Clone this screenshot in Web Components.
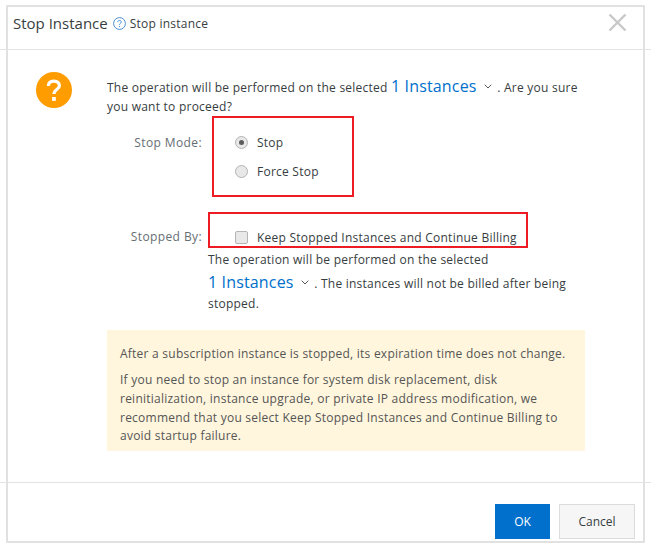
<!DOCTYPE html>
<html lang="en">
<head>
<meta charset="UTF-8">
<title>Stop Instance</title>
<style>
    html, body { margin: 0; background: #fff; }
    body { font-family: "Open Sans", "Liberation Sans", sans-serif; color: #373d41; letter-spacing: .24px; }
</style>
</head>
<body>
<stop-dialog>
    <span slot="title">Stop Instance</span>
    <span slot="hint">Stop instance</span>
    <confirm-intro>
        The operation will be performed on the selected <instance-link></instance-link> . Are you sure you want to proceed?
    </confirm-intro>
    <form-row label="Stop Mode:" class="mode">
        <choice-item type="radio" checked>Stop</choice-item>
        <choice-item type="radio">Force Stop</choice-item>
    </form-row>
    <form-row label="Stopped By:" class="by">
        <choice-item type="checkbox">Keep Stopped Instances and Continue Billing</choice-item>
        <stop-note>The operation will be performed on the selected <instance-link></instance-link> . The instances will not be billed after being stopped.</stop-note>
    </form-row>
    <notice-box>
        <p>After a subscription instance is stopped, its expiration time does not change.</p>
        <p>If you need to stop an instance for system disk replacement, disk reinitialization, instance upgrade, or private IP address modification, we recommend that you select Keep Stopped Instances and Continue Billing to avoid startup failure.</p>
    </notice-box>
</stop-dialog>
<script>
    class StopDialog extends HTMLElement {
        constructor() {
            super();
            this.attachShadow({mode: 'open'}).innerHTML = `
            <style>
                :host { display: block; position: relative; width: 651px; height: 544px; overflow: hidden; font-size: 12px; }
                .frame { position: absolute; left: 6px; top: 5px; width: 635px; height: 534px; border: 2px solid #e1e1e1; border-radius: 1px; pointer-events: none; }
                .mark { position: absolute; border: 2px solid #ed1c24; pointer-events: none; box-sizing: border-box; }
                .mark.a { left: 212px; top: 116px; width: 142px; height: 81px; }
                .mark.b { left: 208px; top: 212px; width: 320px; height: 36px; }
                header { height: 49px; border-bottom: 1px solid #e3e3e3; padding-left: 13px; padding-right: 24px; display: flex; align-items: flex-start; }
                .title { font-size: 15px; letter-spacing: 0; line-height: 20px; margin-top: 13px; color: #373d41; }
                .help { width: 13px; height: 13px; margin: 17px 3px 0 5px; flex: none; }
                .hint { font-size: 12px; line-height: 18px; margin-top: 15px; margin-left: 1px; color: #373d41; }
                .close { margin-left: auto; margin-top: 13px; width: 19px; height: 19px; }
                main { height: 432px; box-sizing: border-box; display: flex; padding: 22px 0 0 36px; }
                .icon { width: 36px; height: 36px; flex: none; }
                .content { width: 478px; margin-left: 35px; }
                footer { border-top: 1px solid #e3e3e3; height: 60px; display: flex; justify-content: flex-end; padding: 21px 16px 0 0; box-sizing: border-box; gap: 9px; }
                button { font: inherit; font-size: 12px; height: 35px; padding: 0; box-sizing: border-box; }
                .ok { width: 55px; border: 0; background: #0070cc; color: #fff; }
                .cancel { width: 76px; border: 1px solid #dcdcdc; background: #f6f6f6; color: #373d41; }
            </style>
            <header>
                <div class="title"><slot name="title"></slot></div>
                <svg class="help" viewBox="0 0 13 13" fill="none">
                    <circle cx="6.5" cy="6.5" r="5.9" stroke="#4a8ed1" stroke-width="1"/>
                    <path d="M4.7 5.1c0-1 .8-1.7 1.8-1.7s1.8.7 1.8 1.6c0 1.3-1.8 1.4-1.8 2.8" stroke="#4a8ed1" stroke-width="1"/>
                    <circle cx="6.5" cy="9.6" r=".7" fill="#4a8ed1"/>
                </svg>
                <div class="hint"><slot name="hint"></slot></div>
                <svg class="close" viewBox="0 0 19 19"><path d="M1.5 1.5l16 16M17.5 1.5l-16 16" stroke="#c8c8c8" stroke-width="2.4" fill="none"/></svg>
            </header>
            <main>
                <svg class="icon" viewBox="0 0 36 36">
                    <circle cx="18" cy="18" r="18" fill="#ff9c00"/>
                    <path d="M12.4 14c0-3.200 2.300-4.900 5.500-4.900s5.500 1.800 5.500 4.600c0 3.900-5.500 3.900-5.500 8.200" fill="none" stroke="#fff" stroke-width="3.200"/>
                    <rect x="16.100" y="25" width="3.700" height="3.900" fill="#fff"/>
                </svg>
                <div class="content"><slot></slot></div>
            </main>
            <footer>
                <button class="ok">OK</button>
                <button class="cancel">Cancel</button>
            </footer>
            <div class="frame"></div>
            <div class="mark a"></div>
            <div class="mark b"></div>`;
        }
    }

    class ConfirmIntro extends HTMLElement {
        constructor() {
            super();
            this.attachShadow({mode: 'open'}).innerHTML = `
            <style>
                :host { display: block; font-size: 12px; line-height: 19px; color: #373d41; margin-top: 5px; --link-line: 19px; }
            </style>
            <slot></slot>`;
        }
    }

    class InstanceLink extends HTMLElement {
        constructor() {
            super();
            this.attachShadow({mode: 'open'}).innerHTML = `
            <style>
                :host { display: inline-block; font-size: 16px; letter-spacing: .15px; line-height: var(--link-line, 20px); color: #0070cc; }
                svg { width: 8px; height: 5px; margin: 0 2px 3px 3px; vertical-align: middle; }
            </style>
            1 Instances <svg viewBox="0 0 8 5"><path d="M.7.7L4 4l3.300-3.300" fill="none" stroke="#555" stroke-width="1"/></svg>`;
        }
    }

    class FormRow extends HTMLElement {
        constructor() {
            super();
            this.attachShadow({mode: 'open'}).innerHTML = `
            <style>
                :host { display: flex; }
                .label { width: 95px; flex: none; text-align: right; font-size: 12px; letter-spacing: .4px; line-height: 20px; color: #666e73; padding-top: 17px; }
                .field { margin-left: 6px; flex: 1; min-width: 0; padding-top: 16px; }
                :host(.by) { margin-top: 46px; }
                :host(.by) .label, :host(.by) .field { padding-top: 0; }
            </style>
            <div class="label">${this.getAttribute('label')}</div>
            <div class="field"><slot></slot></div>`;
        }
    }

    class ChoiceItem extends HTMLElement {
        constructor() {
            super();
            const isRadio = this.getAttribute('type') === 'radio';
            const on = this.hasAttribute('checked');
            this.attachShadow({mode: 'open'}).innerHTML = `
            <style>
                :host { display: flex; align-items: center; height: 20px; padding-left: 27px; font-size: 12px; color: #373d41; }
                :host([checked]) { margin-bottom: 9px; }
                .box { width: 13px; height: 13px; flex: none; box-sizing: border-box; border: 1px solid #b4b4b4; background: #e8e8e8; margin-right: 9px; display: flex; align-items: center; justify-content: center; }
                .radio { border-radius: 50%; }
                .check { border-radius: 2px; }
                i { width: 5px; height: 5px; border-radius: 50%; background: #5c5c5c; }
            </style>
            <span class="box ${isRadio ? 'radio' : 'check'}">${on ? '<i></i>' : ''}</span>
            <span><slot></slot></span>`;
        }
    }

    class StopNote extends HTMLElement {
        constructor() {
            super();
            this.attachShadow({mode: 'open'}).innerHTML = `
            <style>
                :host { display: block; width: 375px; font-size: 12px; line-height: 20px; color: #373d41; margin-top: 3px; --link-line: 24px; }
            </style>
            <slot></slot>`;
        }
    }

    class NoticeBox extends HTMLElement {
        constructor() {
            super();
            this.attachShadow({mode: 'open'}).innerHTML = `
            <style>
                :host { display: block; margin-top: 16px; background: #fff6dd; padding: 15px 13px 5px; font-size: 12px; line-height: 18.7px; color: #555; }
                ::slotted(p) { margin: 0 0 7.5px; }
                ::slotted(p:last-child) { margin-bottom: 0; }
            </style>
            <slot></slot>`;
        }
    }

    customElements.define('stop-dialog', StopDialog);
    customElements.define('confirm-intro', ConfirmIntro);
    customElements.define('instance-link', InstanceLink);
    customElements.define('form-row', FormRow);
    customElements.define('choice-item', ChoiceItem);
    customElements.define('stop-note', StopNote);
    customElements.define('notice-box', NoticeBox);
</script>
</body>
</html>
